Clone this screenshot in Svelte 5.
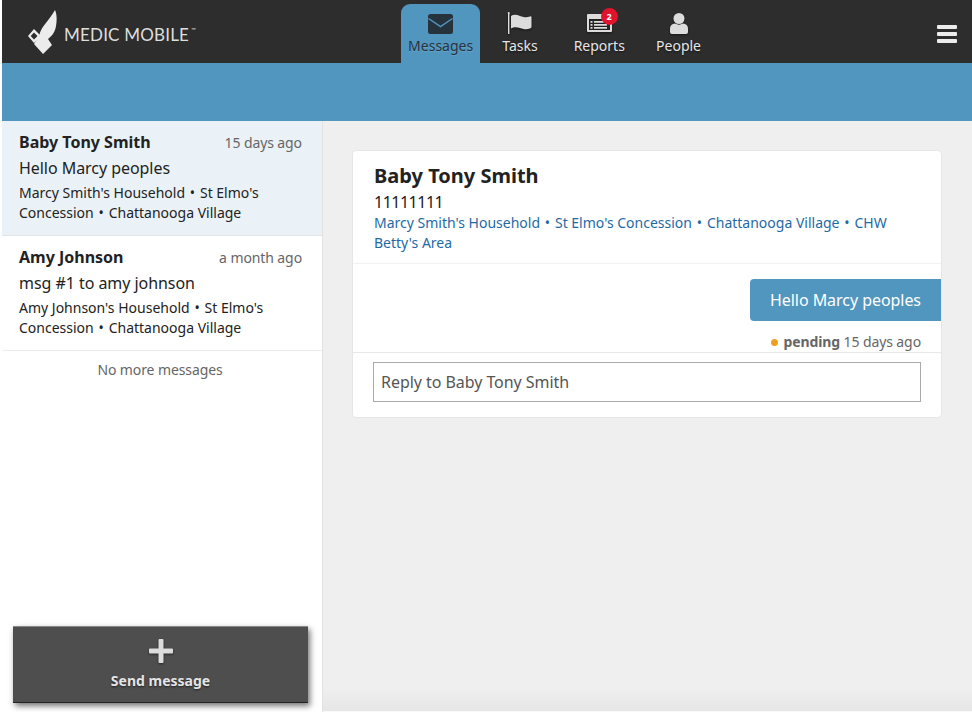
<script>
  const nav = [
    { id: 'messages', label: 'Messages', active: true },
    { id: 'tasks', label: 'Tasks' },
    { id: 'reports', label: 'Reports', badge: 2 },
    { id: 'people', label: 'People' }
  ];
  const items = [
    { name: 'Baby Tony Smith', time: '15 days ago', msg: 'Hello Marcy peoples', lineage: ["Marcy Smith's Household", "St Elmo's Concession", 'Chattanooga Village'], selected: true },
    { name: 'Amy Johnson', time: 'a month ago', msg: 'msg #1 to amy johnson', lineage: ["Amy Johnson's Household", "St Elmo's Concession", 'Chattanooga Village'] }
  ];
  const path = ["Marcy Smith's Household", "St Elmo's Concession", 'Chattanooga Village', "CHW Betty's Area"];
</script>

{#snippet crumbs(parts)}
  {#each parts as part, i}{#if i > 0}{' '}<span class="sep">•</span>{' '}{/if}{part}{/each}
{/snippet}

<div class="page">
  <header class="top">
    <div class="logo">
      <svg width="30" height="46" viewBox="0 0 30 46">
        <path class="wing" d="M27 1C29 5 29 12 28 17C27 23 24 27 20 30L24 36L15 45L6 35L11 27C13 17 21 12 27 1Z"/>
        <path class="wing" fill-rule="evenodd" d="M6 20L13 27L6 34L0 27ZM6 23.500L2.700 27L6 30.500L9.500 27Z"/>
      </svg>
      <span class="brand">MEDIC MOBILE<sup>™</sup></span>
    </div>
    <nav class="tabs">
      {#each nav as n}
        <div class="tab" class:active={n.active}>
          <span class="icon">
            {#if n.id === 'messages'}
              <svg class="env" width="25" height="20" viewBox="0 0 25 20"><rect width="25" height="20" rx="2.500"/><path class="vee" d="M0.500 4.500L12.500 12.500L24.500 4.500"/></svg>
            {:else if n.id === 'tasks'}
              <svg width="25" height="22" viewBox="0 0 25 22"><circle cx="1.700" cy="1" r="1"/><path d="M1 1h1.400v21H1z"/><path d="M4 4c3-2 6-1 9 0s6 2 10 .5c1-.4 1.500 0 1.500 1v9c0 1-.5 1.500-1.500 2-4 1.500-7 .5-10-.5s-6-1.500-9 .5z"/></svg>
            {:else if n.id === 'reports'}
              <svg width="25" height="20" viewBox="0 0 25 20"><path fill-rule="evenodd" d="M1 1h23a1 1 0 0 1 1 1v16a1 1 0 0 1-1 1H1a1 1 0 0 1-1-1V2a1 1 0 0 1 1-1zM2 6v11h21V6z"/><path d="M3.500 8h2v1.800h-2zM7 8h13v1.800H7zM3.500 11h2v1.800h-2zM7 11h13v1.800H7zM3.500 14h2v1.800h-2zM7 14h13v1.800H7z"/></svg>
              <b class="badge">{n.badge}</b>
            {:else}
              <svg width="18" height="21" viewBox="0 0 18 21"><circle cx="9" cy="5.500" r="5.500"/><path d="M5 10.500c2.500 1.500 5.500 1.500 8 0 3 .5 5 2 5 5V19a2 2 0 0 1-2 2H2a2 2 0 0 1-2-2v-3.500c0-3 2-4.500 5-5z"/></svg>
            {/if}
          </span>
          <span class="label">{n.label}</span>
        </div>
      {/each}
    </nav>
    <div class="burger"><i></i><i></i><i></i></div>
  </header>
  <div class="band"></div>
  <main class="main">
    <aside class="list">
      {#each items as it}
        <div class="item" class:selected={it.selected}>
          <div class="row"><strong>{it.name}</strong><span class="time">{it.time}</span></div>
          <p class="msg">{it.msg}</p>
          <p class="lineage">{@render crumbs(it.lineage)}</p>
        </div>
      {/each}
      <div class="more">No more messages</div>
      <button class="send">
        <svg width="24" height="24" viewBox="0 0 24 24"><path d="M9.500 1a1 1 0 0 1 1-1h3a1 1 0 0 1 1 1v8.500H23a1 1 0 0 1 1 1v3a1 1 0 0 1-1 1h-8.500V23a1 1 0 0 1-1 1h-3a1 1 0 0 1-1-1v-8.500H1a1 1 0 0 1-1-1v-3a1 1 0 0 1 1-1h8.500z"/></svg>
        <span>Send message</span>
      </button>
    </aside>
    <section class="content">
      <article class="card">
        <div class="head">
          <h2>Baby Tony Smith</h2>
          <div class="phone">11111111</div>
          <div class="path">{@render crumbs(path)}</div>
        </div>
        <div class="thread">
          <div class="bubble">Hello Marcy peoples</div>
          <div class="status"><i class="dot"></i><b>pending</b> 15 days ago</div>
        </div>
        <div class="reply"><div class="input">Reply to Baby Tony Smith</div></div>
      </article>
    </section>
  </main>
</div>

<style>
  :global(body) { margin: 0; background: #fff; }
  .page { width: 972px; height: 712px; font-family: "Noto Sans", "Open Sans", sans-serif; color: #222; display: flex; flex-direction: column; overflow: hidden; padding-left: 2px; box-sizing: border-box; }
  .top { height: 63px; background: #2d2d2d; display: flex; align-items: stretch; position: relative; flex: none; }
  .logo { width: 399px; display: flex; align-items: center; padding-left: 26px; box-sizing: border-box; }
  .wing { fill: #ececec; }
  .brand { font-family: Lato, sans-serif; font-weight: 400; font-size: 17px; letter-spacing: .2px; color: #dedede; margin: 6px 0 0 6px; white-space: nowrap; }
  .brand sup { font-size: 6px; vertical-align: 9px; line-height: 0; letter-spacing: 0; margin-left: 2px; }
  .tabs { display: flex; align-items: flex-end; }
  .tab { width: 79.300px; height: 59px; display: flex; flex-direction: column; align-items: center; color: #e6e6e6; border-radius: 9px 9px 0 0; font-size: 14px; text-shadow: 0 1px 2px rgba(0,0,0,.6); }
  .tab.active { background: #5196bf; color: #26323c; text-shadow: 0 1px 1px rgba(255,255,255,.15); }
  .icon { height: 28px; width: 100%; display: flex; align-items: center; justify-content: center; position: relative; margin-top: 4px; }
  .icon svg { fill: #dcdcdc; margin-top: 2px; filter: drop-shadow(0 1px 1px rgba(0,0,0,.5)); }
  .active .icon svg { fill: #26323c; filter: none; }
  .icon svg.env { margin-top: 4px; }
  .vee { fill: none; stroke: #5196bf; stroke-width: 1.500; }
  .label { line-height: 19px; }
  .badge { position: absolute; left: 41px; top: 0; width: 17px; height: 17px; border-radius: 50%; background: #e0142c; color: #fff; font-size: 9px; line-height: 17px; text-align: center; font-weight: 700; text-shadow: none; }
  .burger { position: absolute; right: 15px; top: 25px; width: 20px; display: flex; flex-direction: column; gap: 3px; }
  .burger i { display: block; height: 4px; background: #ececec; border-radius: 1px; }
  .band { height: 58px; flex: none; background: #5196bf; }
  .main { flex: 1; display: flex; min-height: 0; }
  .list { width: 320px; flex: none; border-right: 1px solid #e2e2e2; position: relative; background: #fff; }
  .item { padding: 11px 20px 11px 17px; border-bottom: 1px solid #ececec; height: 92px; }
  .item.selected { background: #eaf2f7; border-bottom-color: #dde5ea; }
  .row { display: flex; justify-content: space-between; align-items: baseline; }
  .row strong { font-size: 16px; line-height: 21px; font-weight: 700; color: #222; }
  .time { font-size: 14px; color: #666; letter-spacing: -.1px; }
  .msg { margin: 4px 0 0; font-size: 16px; line-height: 22px; color: #222; letter-spacing: -.05px; }
  .lineage { margin: 4px 0 0; font-size: 14px; line-height: 20px; color: #222; }
  .sep { margin: 0 1.200px; }
  .more { text-align: center; font-size: 14px; color: #666; margin-top: 9px; padding-right: 4px; line-height: 20px; letter-spacing: -.1px; }
  .send { position: absolute; left: 11px; bottom: 9px; width: 295px; height: 77px; border: 0; border-top: 1px solid #888; border-bottom: 1px solid #222; background: #4e4e4e; color: #e4e4e4; box-shadow: 2px 3px 6px rgba(0,0,0,.55); display: flex; flex-direction: column; align-items: center; padding: 12px 0 0; font-family: inherit; font-size: 14px; font-weight: 700; text-shadow: 0 1px 2px rgba(0,0,0,.6); box-sizing: border-box; }
  .send svg { fill: #dcdcdc; filter: drop-shadow(0 1px 1px rgba(0,0,0,.5)); }
  .send span { margin-top: 8px; line-height: 19px; }
  .content { flex: 1; background: linear-gradient(#efefef calc(100% - 24px), #e6e6e6 calc(100% - 1px), #f8f8f8 calc(100% - 1px)); padding: 29px 30px 0 29px; min-width: 0; }
  .card { background: #fff; border: 1px solid #e6e6e6; border-radius: 4px; height: 268px; box-sizing: border-box; display: flex; flex-direction: column; }
  .head { padding: 11px 20px 11px 21px; border-bottom: 1px solid #f2f2f2; height: 113px; box-sizing: border-box; }
  h2 { margin: 0; font-size: 20px; line-height: 27px; font-weight: 700; color: #222; }
  .phone { font-size: 16px; line-height: 22px; margin-top: 2px; color: #222; letter-spacing: -.5px; }
  .path { font-size: 14px; line-height: 20px; color: #1f6aa5; }
  .thread { display: flex; flex-direction: column; align-items: flex-end; padding-top: 15px; height: 89px; box-sizing: border-box; border-bottom: 1px solid #e8e8e8; }
  .bubble { background: #5196bf; color: #fff; font-size: 16px; line-height: 42px; padding: 0 20px; border-radius: 4px 0 0 4px; letter-spacing: -.05px; }
  .status { font-size: 14px; color: #666; line-height: 20px; margin-top: 11px; padding-right: 20px; display: flex; align-items: center; white-space: pre; letter-spacing: -.1px; }
  .dot { width: 7px; height: 7px; border-radius: 50%; background: #f0a020; margin-right: 5px; }
  .reply { padding: 9px 20px 0; }
  .input { border: 1px solid #aaa; height: 40px; box-sizing: border-box; font-size: 16px; color: #555; line-height: 38px; padding-left: 7px; letter-spacing: -.05px; }
</style>
